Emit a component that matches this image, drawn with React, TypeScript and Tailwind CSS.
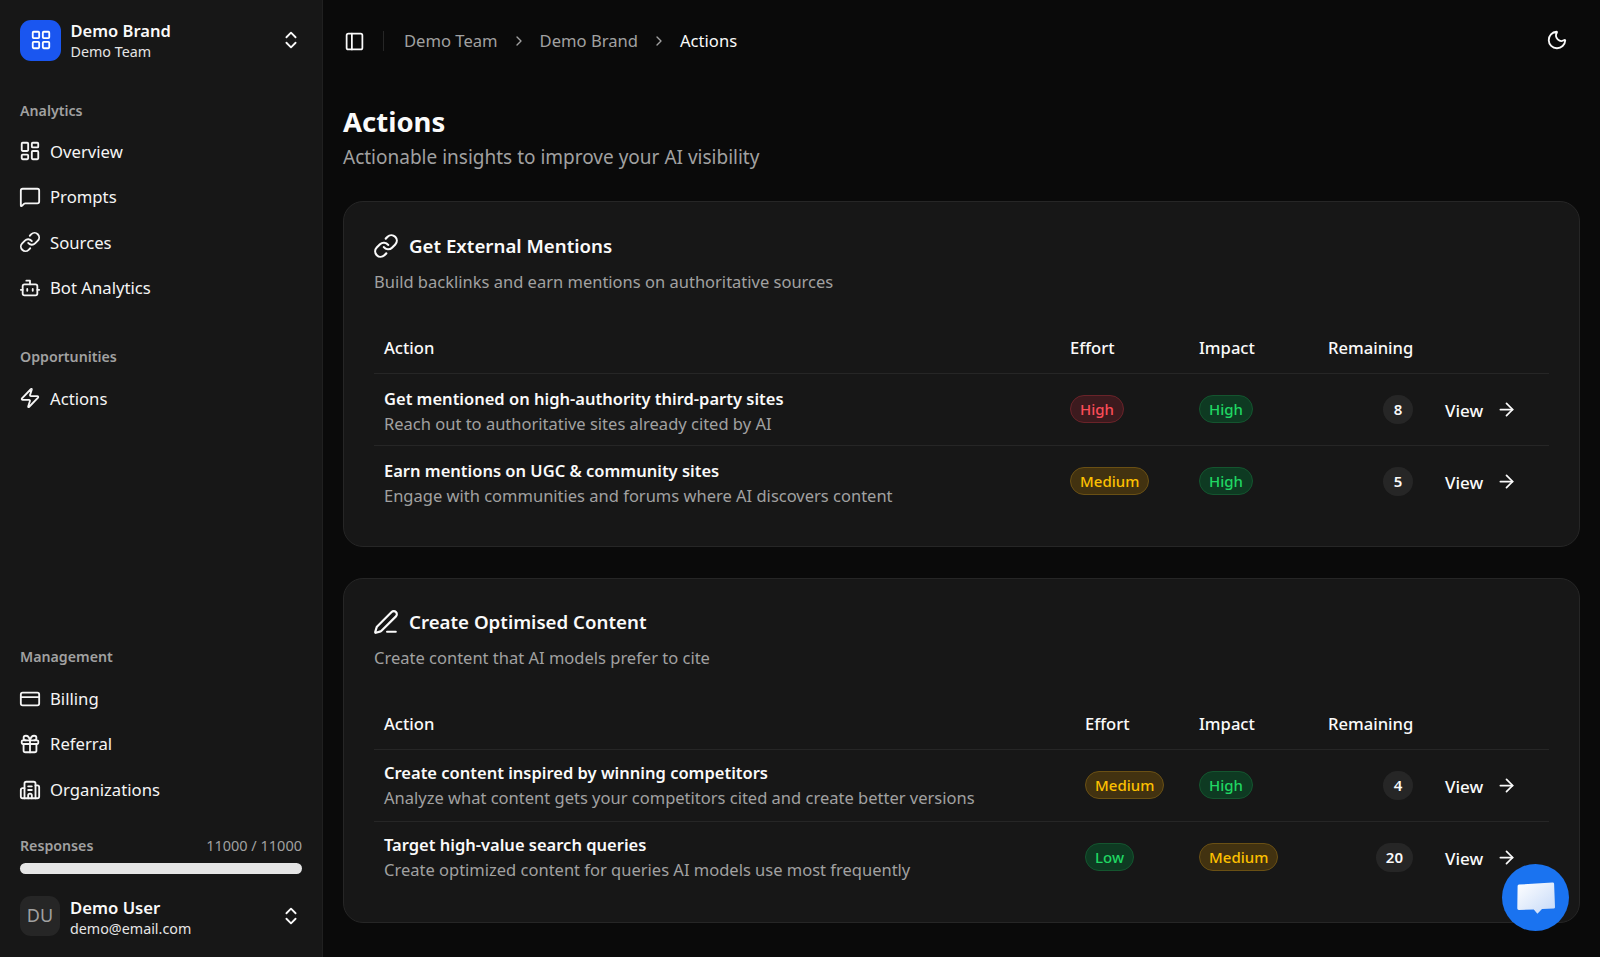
import { ArrowRight, Bot, Building2, ChevronRight, ChevronsUpDown, CreditCard, Gift, LayoutDashboard, LayoutGrid, Link, MessageSquare, Moon, PanelLeft, PenLine, Zap } from 'lucide-react';
import type { ReactNode } from 'react';

type Level = 'High' | 'Medium' | 'Low';

const badgeStyles: Record<string, string> = {
  red: 'bg-[#3c1a1e] border-[#6a2329] text-[#fa4d58]',
  green: 'bg-[#0e3a22] border-[#14552f] text-[#20d763]',
  yellow: 'bg-[#423210] border-[#6a5014] text-[#fdc000]',
};

function LevelBadge({ level, tone }: { level: Level; tone: string }) {
  return (
    <span className={`inline-flex h-[28px] items-center rounded-full border px-[9px] text-[15px] font-medium ${badgeStyles[tone]}`}>
      {level}
    </span>
  );
}

function NavItem({ icon, label }: { icon: ReactNode; label: string }) {
  return (
    <div className="flex h-[45.5px] items-center gap-[10px] px-5 text-[16.7px] text-[#f5f5f5]">
      <span className="flex w-5 justify-center">{icon}</span>
      {label}
    </div>
  );
}

function SectionLabel({ children, className = '' }: { children: ReactNode; className?: string }) {
  return <div className={`flex h-5 items-center px-5 text-[14.2px] font-semibold text-[#a1a1a1] ${className}`}>{children}</div>;
}

const navIcon = 'h-[22px] w-[22px] shrink-0';

function Sidebar() {
  return (
    <aside className="flex h-full w-[323px] shrink-0 flex-col border-r border-[#202020] bg-[#171717]">
      <div className="flex items-center px-5 pt-[19px]">
        <div className="flex h-[41px] w-[41px] items-center justify-center rounded-[11px] bg-[#1a56f0]">
          <LayoutGrid className="h-[22px] w-[22px] text-white" strokeWidth={2} />
        </div>
        <div className="ml-[9.5px] flex flex-col">
          <span className="text-[16.5px] leading-[23px] font-semibold text-[#fafafa]">Demo Brand</span>
          <span className="text-[14.3px] leading-[19px] text-[#e5e5e5]">Demo Team</span>
        </div>
        <ChevronsUpDown className="ml-auto h-[22px] w-[22px] text-[#fafafa]" strokeWidth={2} />
      </div>

      <SectionLabel className="mt-[40px] mb-[7.5px]">Analytics</SectionLabel>
      <NavItem icon={<LayoutDashboard className={navIcon} />} label="Overview" />
      <NavItem icon={<MessageSquare className={navIcon} />} label="Prompts" />
      <NavItem icon={<Link className={navIcon} />} label="Sources" />
      <NavItem icon={<Bot className={navIcon} />} label="Bot Analytics" />

      <SectionLabel className="mt-[36px] mb-[9px]">Opportunities</SectionLabel>
      <NavItem icon={<Zap className={navIcon} />} label="Actions" />

      <SectionLabel className="mt-auto mb-[9px]">Management</SectionLabel>
      <NavItem icon={<CreditCard className={navIcon} />} label="Billing" />
      <NavItem icon={<Gift className={navIcon} />} label="Referral" />
      <NavItem icon={<Building2 className={navIcon} />} label="Organizations" />

      <div className="mt-[23px] px-5">
        <div className="flex items-center justify-between text-[14.5px] text-[#a1a1a1]">
          <span className="font-semibold text-[14.2px]">Responses</span>
          <span>11000 / 11000</span>
        </div>
        <div className="mt-[6px] h-[11px] rounded-full bg-[#e5e5e5]" />
      </div>

      <div className="mt-[19px] mb-[19px] flex items-center px-5">
        <div className="flex h-10 w-10 items-center justify-center rounded-[11px] bg-[#262626] text-[18px] text-[#a1a1a1]">DU</div>
        <div className="ml-[10px] flex flex-col pt-[3px]">
          <span className="text-[16.7px] leading-[23px] font-semibold text-[#fafafa]">Demo User</span>
          <span className="text-[14.3px] leading-[19px] text-[#e5e5e5]">demo@email.com</span>
        </div>
        <ChevronsUpDown className="ml-auto h-[22px] w-[22px] text-[#fafafa]" strokeWidth={2} />
      </div>
    </aside>
  );
}

type Row = {
  title: string;
  desc: string;
  effort: [Level, string];
  impact: [Level, string];
  remaining: number;
};

type CardProps = {
  icon: ReactNode;
  title: string;
  desc: string;
  rows: Row[];
  gridCols: string;
  cardPad: string;
  rowPad: string;
};

function ActionCard({ icon, title, desc, rows, gridCols, cardPad, rowPad }: CardProps) {
  return (
    <section className={`rounded-[20px] border border-[#262626] bg-[#171717] px-[30px] pb-[29px] ${cardPad}`}>
      <div className="flex h-7 items-center gap-[11px]">
        <span className="flex w-6 justify-center">{icon}</span>
        <h2 className="text-[18.7px] font-semibold text-[#fafafa]">{title}</h2>
      </div>
      <p className="mt-[9.5px] text-[16.5px] leading-6 text-[#a1a1a1]">{desc}</p>

      <div className={`mt-[20px] grid h-[60.5px] items-center border-b border-[#262626] pt-[11px] text-[16.6px] font-medium text-[#fafafa] ${gridCols}`}>
        <span className="pl-[10px]">Action</span>
        <span className="pl-[10px]">Effort</span>
        <span className="pl-[10px]">Impact</span>
        <span className="pl-[10px]">Remaining</span>
        <span />
      </div>

      {rows.map((row, i) => (
        <div key={row.title} className={`grid h-[71.5px] items-center ${gridCols} ${i === 0 ? 'border-b border-[#262626]' : ''}`}>
          <div className={`pl-[10px] ${rowPad}`}>
            <div className="text-[16.5px] leading-[25px] font-semibold text-[#fafafa]">{row.title}</div>
            <div className="text-[16.5px] leading-[25px] text-[#a1a1a1]">{row.desc}</div>
          </div>
          <div className="pl-[10px]">
            <LevelBadge level={row.effort[0]} tone={row.effort[1]} />
          </div>
          <div className="pl-[10px]">
            <LevelBadge level={row.impact[0]} tone={row.impact[1]} />
          </div>
          <div className="flex justify-end pr-[10px]">
            <span className="flex h-[29px] min-w-[30px] items-center justify-center rounded-full bg-[#262626] px-[10px] text-[15px] font-semibold text-[#fafafa]">
              {row.remaining}
            </span>
          </div>
          <div className="flex items-center pl-[22px] text-[#fafafa]">
            <span className="pt-[2px] text-[17px] font-medium">View</span>
            <ArrowRight className="ml-[13px] h-[21px] w-[21px]" />
          </div>
        </div>
      ))}
    </section>
  );
}

export default function App() {
  return (
    <div className="relative flex h-[957px] w-full overflow-hidden bg-[#0a0a0a] font-['Noto_Sans',sans-serif]">
      <Sidebar />
      <main className="flex min-w-0 flex-1 flex-col">
        <header className="flex h-[82px] shrink-0 items-center pr-[20px] pl-[21px] text-[16.6px]">
          <PanelLeft className="h-[21px] w-[21px] text-[#fafafa]" />
          <span className="ml-[18px] mr-[20px] h-[20px] w-px bg-[#262626]" />
          <span className="text-[#a1a1a1]">Demo Team</span>
          <ChevronRight className="mx-[13px] h-4 w-4 text-[#a1a1a1]" />
          <span className="text-[#a1a1a1]">Demo Brand</span>
          <ChevronRight className="mx-[13px] h-4 w-4 text-[#a1a1a1]" />
          <span className="text-[#fafafa]">Actions</span>
          <Moon className="ml-auto mr-[12px] mb-[2px] h-[22px] w-[22px] text-[#fafafa]" />
        </header>

        <div className="flex flex-1 flex-col px-[20px]">
          <h1 className="mt-[20px] text-[27.5px] leading-[40px] font-bold text-[#fafafa]">Actions</h1>
          <p className="mt-[1px] text-[19px] leading-[28px] text-[#a1a1a1]">Actionable insights to improve your AI visibility</p>

          <div className="mt-[30px] flex flex-col gap-[31px]">
            <ActionCard
              icon={<Link className="h-[26px] w-[26px] shrink-0 text-[#fafafa]" />}
              title="Get External Mentions"
              desc="Build backlinks and earn mentions on authoritative sources"
              gridCols="grid-cols-[1fr_129px_129px_105px_126px]"
              cardPad="pt-[30px]"
              rowPad="pt-[3px]"
              rows={[
                { title: 'Get mentioned on high-authority third-party sites', desc: 'Reach out to authoritative sites already cited by AI', effort: ['High', 'red'], impact: ['High', 'green'], remaining: 8 },
                { title: 'Earn mentions on UGC & community sites', desc: 'Engage with communities and forums where AI discovers content', effort: ['Medium', 'yellow'], impact: ['High', 'green'], remaining: 5 },
              ]}
            />
            <ActionCard
              icon={<PenLine className="h-[26px] w-[26px] shrink-0 text-[#fafafa]" />}
              title="Create Optimised Content"
              desc="Create content that AI models prefer to cite"
              gridCols="grid-cols-[1fr_114px_129px_105px_126px]"
              cardPad="pt-[29px]"
              rowPad="pt-[0px]"
              rows={[
                { title: 'Create content inspired by winning competitors', desc: 'Analyze what content gets your competitors cited and create better versions', effort: ['Medium', 'yellow'], impact: ['High', 'green'], remaining: 4 },
                { title: 'Target high-value search queries', desc: 'Create optimized content for queries AI models use most frequently', effort: ['Low', 'green'], impact: ['Medium', 'yellow'], remaining: 20 },
              ]}
            />
          </div>
        </div>
      </main>

      <button className="absolute right-[31px] bottom-[26px] flex h-[67px] w-[67px] items-center justify-center rounded-full bg-[#1a73f0]">
        <svg width="40" height="34" viewBox="0 0 40 34" fill="none">
          <defs>
            <linearGradient id="chatFill" x1="0" y1="0" x2="1" y2="1">
              <stop offset="0" stopColor="#ffffff" />
              <stop offset="1" stopColor="#c5d9f8" />
            </linearGradient>
          </defs>
          <path d="M3 3.6 36.5 1.4a1.5 1.5 0 0 1 1.6 1.4l.9 23.2a1.5 1.5 0 0 1-1.4 1.6l-11.6.5-4.6 4.6-3.6-4.1-15 .3a1.5 1.5 0 0 1-1.5-1.4L1.6 5.1A1.5 1.5 0 0 1 3 3.6Z" fill="url(#chatFill)" />
        </svg>
      </button>
    </div>
  );
}
